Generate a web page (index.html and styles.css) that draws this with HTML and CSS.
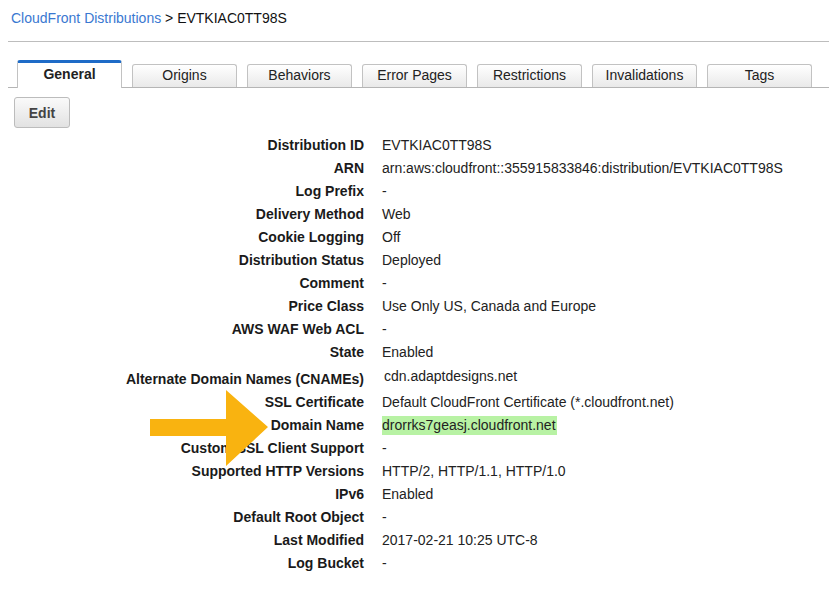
FILE: index.html
```html
<!DOCTYPE html>
<html>
<head>
<meta charset="utf-8">
<link rel="stylesheet" href="styles.css">
</head>
<body>
<div class="page">
  <div class="crumb"><a class="crumb-link">CloudFront Distributions</a> &gt; EVTKIAC0TT98S</div>
  <div class="rule"></div>
  <div class="tabs">
    <div class="tab active">General</div>
    <div class="tab">Origins</div>
    <div class="tab">Behaviors</div>
    <div class="tab">Error Pages</div>
    <div class="tab">Restrictions</div>
    <div class="tab">Invalidations</div>
    <div class="tab">Tags</div>
  </div>
  <div class="toolbar"><button class="btn">Edit</button></div>
  <div class="details">
    <div class="lbl">Distribution ID</div><div class="val">EVTKIAC0TT98S</div>
    <div class="lbl">ARN</div><div class="val">arn:aws:cloudfront::355915833846:distribution/EVTKIAC0TT98S</div>
    <div class="lbl">Log Prefix</div><div class="val">-</div>
    <div class="lbl">Delivery Method</div><div class="val">Web</div>
    <div class="lbl">Cookie Logging</div><div class="val">Off</div>
    <div class="lbl">Distribution Status</div><div class="val">Deployed</div>
    <div class="lbl">Comment</div><div class="val">-</div>
    <div class="lbl">Price Class</div><div class="val">Use Only US, Canada and Europe</div>
    <div class="lbl">AWS WAF Web ACL</div><div class="val">-</div>
    <div class="lbl">State</div><div class="val">Enabled</div>
    <div class="lbl tall">Alternate Domain Names (CNAMEs)</div><div class="val tall-val">cdn.adaptdesigns.net</div>
    <div class="lbl">SSL Certificate</div><div class="val">Default CloudFront Certificate (*.cloudfront.net)</div>
    <div class="lbl">Domain Name</div><div class="val"><span class="hl">drorrks7geasj.cloudfront.net</span></div>
    <div class="lbl">Custom SSL Client Support</div><div class="val">-</div>
    <div class="lbl">Supported HTTP Versions</div><div class="val">HTTP/2, HTTP/1.1, HTTP/1.0</div>
    <div class="lbl">IPv6</div><div class="val">Enabled</div>
    <div class="lbl">Default Root Object</div><div class="val">-</div>
    <div class="lbl">Last Modified</div><div class="val">2017-02-21 10:25 UTC-8</div>
    <div class="lbl">Log Bucket</div><div class="val">-</div>
  </div>
  <svg class="arrow" width="130" height="80" viewBox="0 0 130 80" xmlns="http://www.w3.org/2000/svg">
    <polygon points="0,29 76,29 76,0 118,37 76,76 76,46 0,46" fill="#f9b310"/>
  </svg>
</div>
</body>
</html>
```

FILE: styles.css
```css
html, body {
  margin: 0;
  padding: 0;
  background: #fff;
}
body {
  font-family: "Liberation Sans", Arial, sans-serif;
  font-size: 14px;
  color: #222;
}
.page {
  position: relative;
  padding-left: 8px;
  padding-top: 9px;
}
.crumb {
  padding-left: 3px;
  line-height: 18px;
  color: #111;
}
.crumb-link {
  color: #3a78d1;
}
.rule {
  margin-top: 14px;
  height: 1px;
  background: #bdbdbd;
}
.tabs {
  margin-top: 18px;
  display: flex;
  align-items: flex-end;
  gap: 10px;
  padding-left: 9px;
  height: 27px;
  border-bottom: 1px solid #b5b5b5;
}
.tab {
  width: 103px;
  height: 22px;
  line-height: 20px;
  text-align: center;
  border: 1px solid #c2c2c2;
  border-bottom: none;
  border-radius: 3px 3px 0 0;
  background: linear-gradient(#ffffff, #e9e9e9);
  color: #222;
}
.tab.active {
  height: 25px;
  line-height: 22px;
  border-top: 3px solid #1e6bc7;
  background: #fff;
  font-weight: bold;
  margin-bottom: -1px;
  position: relative;
}
.toolbar {
  padding-top: 9px;
  padding-left: 6px;
}
.btn {
  width: 56px;
  height: 31px;
  border: 1px solid #bcbcbc;
  border-radius: 3px;
  background: linear-gradient(#fafafa, #e2e2e2);
  font-family: "Liberation Sans", Arial, sans-serif;
  font-size: 14px;
  font-weight: bold;
  color: #444;
  padding: 0;
}
.details {
  margin-top: 6px;
  display: grid;
  grid-template-columns: 356px 1fr;
  column-gap: 18px;
  line-height: 23px;
}
.lbl {
  text-align: right;
  font-weight: bold;
  color: #1a1a1a;
}
.val {
  color: #222;
}
.lbl.tall {
  padding-top: 4px;
}
.val.tall-val {
  padding-top: 1px;
  padding-left: 2px;
}
.hl {
  background: #b8f2a4;
  padding: 1px 1px 2px 0;
}
.arrow {
  position: absolute;
  left: 150px;
  top: 390px;
}
```
